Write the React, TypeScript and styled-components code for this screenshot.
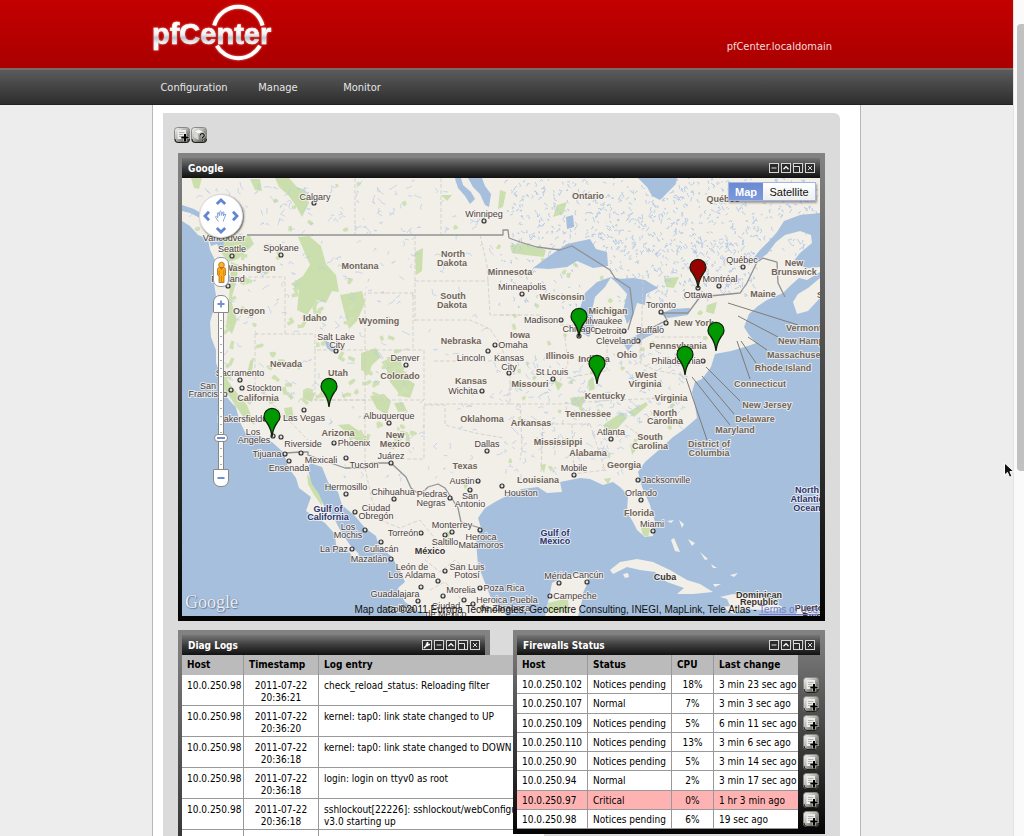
import React from "react";
import styled, { createGlobalStyle } from "styled-components";

const uiFont = `"DejaVu Sans Condensed", "Noto Sans", "DejaVu Sans", sans-serif`;
const mapFont = `"Liberation Sans", Arial, sans-serif`;

const GlobalStyle = createGlobalStyle`
  *, *::before, *::after { box-sizing: border-box; }
  html, body { margin: 0; padding: 0; }
  body {
    background: #ededed;
    font-family: ${uiFont};
    font-size: 10px;
    line-height: 12px;
    color: #000;
  }
  button { font: inherit; padding: 0; border: 0; background: none; cursor: pointer; }
`;

/* ---------- page frame ---------- */

const Shell = styled.div`
  display: flex;
  height: 100vh;
  overflow: hidden;
`;

const Main = styled.div`
  flex: 1;
  min-width: 0;
  display: flex;
  flex-direction: column;
`;

const Centered = styled.div`
  width: 100%;
  max-width: 709px;
  margin: 0 auto;
  display: flex;
`;

const Header = styled.header`
  flex: none;
  height: 68px;
  background: linear-gradient(#c30000, #aa0000);
`;

const HeaderRow = styled(Centered)`
  justify-content: space-between;
  align-items: flex-start;
`;

const LogoSvg = styled.svg`
  display: block;
  overflow: visible;
`;

const HostName = styled.div`
  padding: 40px 29px 0 0;
  font-size: 11px;
  line-height: 14px;
  color: #f3dede;
`;

const NavBar = styled.nav`
  flex: none;
  height: 37px;
  border-top: 2px solid #746c6a;
  border-bottom: 1px solid #222;
  background: linear-gradient(#5b5b5b, #2d2d2d);
`;

const NavLink = styled.a`
  width: 84px;
  line-height: 35px;
  font-size: 11px;
  text-align: center;
  text-decoration: none;
  color: #e6e6e6;
`;

const Sheet = styled.main`
  flex: none;
  width: 100%;
  max-width: 709px;
  margin: 0 auto;
  padding: 8px 20px 20px 10px;
  background: #fff;
  border: solid #b8b8b8;
  border-width: 0 1px;
`;

const Panel = styled.section`
  padding: 14px 11px;
  border-radius: 0 6px 6px 0;
  background: #dbdbdb;
`;

const Toolbar = styled.div`
  display: flex;
  gap: 1px;
  margin-bottom: 10px;
`;

const IconButton = styled.button`
  display: block;
  width: 16px;
  height: 16px;
`;

const Widgets = styled.div`
  padding: 0 4px;
  display: grid;
  grid-template-columns: 1fr 1fr;
  column-gap: 23px;
  row-gap: 9px;
  align-items: start;
`;

/* ---------- portlets ---------- */

const Portlet = styled.section<{ $wide?: boolean; $raised?: boolean; $fade?: string }>`
  grid-column: ${(p) => (p.$wide ? "1 / -1" : "auto")};
  position: ${(p) => (p.$raised ? "relative" : "static")};
  z-index: ${(p) => (p.$raised ? 1 : "auto")};
  min-width: 0;
  padding: 5px 5px 5px 4px;
  background: linear-gradient(#838383, ${(p) => p.$fade ?? "#040404"});
`;

const PortletHead = styled.header`
  display: flex;
  align-items: center;
  justify-content: space-between;
  height: 20px;
  padding: 0 5px 0 6px;
  background: linear-gradient(#767676, #3c3c3c 50%, #111);
`;

const PortletTitle = styled.h2`
  margin: 0;
  padding-top: 2px;
  font-size: 10px;
  line-height: 18px;
  font-weight: bold;
  color: #fff;
`;

const WindowButtons = styled.div`
  display: flex;
  gap: 2px;
`;

const WindowButton = styled.button`
  display: block;
  width: 10px;
  height: 10px;
  svg { display: block; }
`;

/* ---------- tables ---------- */

const Grid = styled.table<{ $width: number; $height?: number }>`
  width: ${(p) => p.$width}px;
  height: ${(p) => (p.$height ? `${p.$height}px` : "auto")};
  table-layout: fixed;
  border-spacing: 0;
  border-collapse: separate;
`;

const Th = styled.th<{ $w?: number; $last?: boolean }>`
  width: ${(p) => (p.$w ? `${p.$w}px` : "auto")};
  height: 20px;
  padding: 0 5px;
  background: #bbb;
  border-right: ${(p) => (p.$last ? 0 : 1)}px solid #999;
  text-align: left;
  font-weight: bold;
  white-space: nowrap;
`;

const Td = styled.td<{ $center?: boolean; $top?: boolean; $last?: boolean; $alert?: boolean }>`
  padding: ${(p) => (p.$top ? "5px 0 1px 5px" : "2px 5px 0")};
  background: ${(p) => (p.$alert ? "#ffb2b2" : "#fff")};
  border: solid #999;
  border-width: 0 ${(p) => (p.$last ? 0 : 1)}px 1px 0;
  text-align: ${(p) => (p.$center ? "center" : "left")};
  vertical-align: ${(p) => (p.$top ? "top" : "middle")};
  white-space: ${(p) => (p.$top ? "normal" : "nowrap")};
`;

const TimeCell = styled(Td)`
  padding: 5px 5px 1px;
`;

const ActionCell = styled.td`
  padding: 0 0 0 5px;
`;

const ActionHead = styled.th`
  width: 22px;
  padding: 0;
`;

/* ---------- map ---------- */

const MapBox = styled.div`
  position: relative;
  height: 438px;
  overflow: hidden;
  background: #a5bfdd;
`;

const MapSvg = styled.svg`
  display: block;
  width: 100%;
  height: 100%;
  font-family: ${mapFont};
  font-size: 9px;
`;

const MapTypes = styled.div`
  position: absolute;
  top: 4px;
  right: 4px;
  display: flex;
  height: 19px;
  border: 1px solid #a3b6e2;
  box-shadow: 1px 2px 2px rgba(0, 0, 0, 0.35);
`;

const MapType = styled.button<{ $on?: boolean }>`
  width: ${(p) => (p.$on ? 34 : 52)}px;
  font-family: ${mapFont};
  font-size: 11px;
  font-weight: ${(p) => (p.$on ? "bold" : "normal")};
  color: ${(p) => (p.$on ? "#fff" : "#111")};
  background: ${(p) => (p.$on ? "linear-gradient(#6b8ad2, #7c99db)" : "linear-gradient(#fff, #eee)")};
`;

const MapControls = styled.div`
  position: absolute;
  top: 16px;
  left: 16px;
  width: 46px;
  display: flex;
  flex-direction: column;
  align-items: center;
`;

const PanPad = styled.div`
  width: 44px;
  height: 44px;
  border-radius: 50%;
  background: #fff;
  border: 1px solid #ddd;
  box-shadow: 1px 1px 2px rgba(0, 0, 0, 0.6);
  display: grid;
  grid-template-columns: repeat(3, 14px);
  grid-template-rows: repeat(3, 14px);
  place-items: center;
`;

const PanButton = styled.button<{ $col: number; $row: number }>`
  grid-column: ${(p) => p.$col};
  grid-row: ${(p) => p.$row};
  display: grid;
  place-items: center;
`;

const Pegman = styled.button`
  width: 16px;
  height: 30px;
  margin-top: 19px;
  border-radius: 7px;
  background: #fff;
  border: 1px solid #999;
  display: grid;
  place-items: center;
`;

const ZoomButton = styled.button<{ $out?: boolean }>`
  width: 16px;
  height: 18px;
  margin-top: ${(p) => (p.$out ? 0 : 8)}px;
  background: #fff;
  border: 1px solid #888;
  border-radius: ${(p) => (p.$out ? "1px 1px 7px 7px" : "7px 7px 1px 1px")};
  display: grid;
  place-items: center;
`;

const ZoomRange = styled.input`
  appearance: none;
  writing-mode: vertical-lr;
  width: 14px;
  height: 156px;
  margin: 0;
  background: linear-gradient(90deg, transparent 4px, #888 4px, #888 5px, #fff 5px, #fff 9px, #888 9px, #888 10px, transparent 10px);
  &::-webkit-slider-runnable-track {
    width: 14px;
    background: repeating-linear-gradient(transparent 0 7px, #aaa 7px 8px) center / 2px 100% no-repeat;
  }
  &::-webkit-slider-thumb {
    appearance: none;
    width: 14px;
    height: 8px;
    border: 1px solid #888;
    border-radius: 4px;
    background: linear-gradient(#6f8fd8, #6f8fd8) center / 8px 2px no-repeat, #fff;
  }
`;

const GoogleMark = styled.div`
  position: absolute;
  left: 3px;
  bottom: 4px;
  font-family: "Liberation Serif", serif;
  font-size: 18px;
  line-height: 20px;
  color: #e8eef6;
  text-shadow: 1px 1px 1px #6c7f9a, 0 0 1px #6c7f9a;
`;

const Attribution = styled.div`
  position: absolute;
  right: 2px;
  bottom: 0;
  font-family: ${mapFont};
  font-size: 10px;
  line-height: 13px;
  white-space: nowrap;
  color: #111;
  a { color: #7777cc; }
`;

/* ---------- scrollbar and pointer ---------- */

const ScrollTrack = styled.aside`
  flex: none;
  width: 11px;
  padding: 24px 0 0 3px;
  background: #fafafa;
  border-left: 1px solid #e2e2e2;
`;

const ScrollThumb = styled.div`
  height: 447px;
  border-radius: 4px 0 0 4px;
  background: #c1c1c1;
`;

const Pointer = styled.svg`
  position: absolute;
  left: 1003px;
  top: 462px;
`;

/* ---------- icons ---------- */

function Tile({ kind }: { kind: "add" | "help" }) {
  return (
    <svg width="16" height="16" viewBox="0 0 16 16" aria-hidden="true">
      <defs>
        <linearGradient id={`tile-${kind}`} x1="0" y1="0" x2="1" y2="1">
          <stop offset="0" stopColor="#f8f8f4" />
          <stop offset="0.45" stopColor="#b4b4ae" />
          <stop offset="1" stopColor="#33332e" />
        </linearGradient>
      </defs>
      <rect x="0.5" y="0.5" width="15" height="15" rx="3" fill={`url(#tile-${kind})`} stroke="#8a8a84" />
      <path d="M1 12Q1 15.5 4 15.5H12.5Q15.5 15.5 15.5 12" fill="none" stroke="#1e1e1a" />
      {kind === "add" ? (
        <>
          <path d="M3.5 3h8.5v9H3.5z" fill="#ececea" />
          <path d="M5 5.5h5.5M5 7.5h4M5 9.5h2.5" stroke="#aaa" strokeWidth="0.9" />
          <path d="M11 6.5v8M7 10.5h8" stroke="#e2e2d8" strokeWidth="3" />
          <path d="M11 7v7.4M7.3 10.6h7.4" stroke="#000" strokeWidth="2" />
        </>
      ) : (
        <>
          <path d="M3 4.5L7.5 2.5 12 4.5v6L7.5 13 3 10.5z" fill="#8c8c86" />
          <path d="M3 4.5l4.5 2.2L12 4.5 7.5 2.5z" fill="#f6f6f2" />
          <path d="M3 4.5l4.5 2.2V13L3 10.5z" fill="#d8d8d2" />
          <path
            d="M9.2 8.6q0-2 2-2t2 1.8q0 1-1.2 1.7-.8.5-.8 1.4M11.2 12.8v1.4"
            fill="none"
            stroke="#d4d4cc"
            strokeWidth="2.6"
          />
          <path
            d="M9.2 8.6q0-2 2-2t2 1.8q0 1-1.2 1.7-.8.5-.8 1.4M11.2 12.8v1.4"
            fill="none"
            stroke="#1a1a1a"
            strokeWidth="1.3"
          />
        </>
      )}
    </svg>
  );
}

type WindowIcon = "tool" | "min" | "up" | "max" | "close";

const windowGlyphs: Record<WindowIcon, React.ReactNode> = {
  tool: <path d="M2 8l3.2-3.2M5.5 2v2.5H8M4.6 3.6v1.8h1.8M4 6l-2 2" stroke="#fff" strokeWidth="1.6" fill="none" />,
  min: <path d="M2.5 5h5" stroke="#e2e2e2" />,
  up: <path d="M2.5 6.2L5 3.6l2.5 2.6" stroke="#fff" strokeWidth="1.3" fill="none" />,
  max: <path d="M1 3.5h5.5V9" stroke="#e2e2e2" fill="none" />,
  close: <path d="M3 3l4 4M7 3L3 7" stroke="#d8d8d8" fill="none" />,
};

const windowNames: Record<WindowIcon, string> = {
  tool: "Configure",
  min: "Minimize",
  up: "Collapse",
  max: "Maximize",
  close: "Close",
};

function Head({ title, icons }: { title: string; icons: WindowIcon[] }) {
  return (
    <PortletHead>
      <PortletTitle>{title}</PortletTitle>
      <WindowButtons>
        {icons.map((k) => (
          <WindowButton key={k} type="button" aria-label={`${windowNames[k]} ${title}`}>
            <svg width="10" height="10" viewBox="0 0 10 10">
              <rect x="0.5" y="0.5" width="9" height="9" fill="#2b2b2b" stroke="#d4d4d4" />
              {windowGlyphs[k]}
            </svg>
          </WindowButton>
        ))}
      </WindowButtons>
    </PortletHead>
  );
}

function Logo() {
  return (
    <LogoSvg width="120" height="68" viewBox="0 0 120 68" role="img" aria-label="pfCenter">
      <defs>
        <linearGradient id="chrome" x1="0" y1="0" x2="0" y2="1">
          <stop offset="0.2" stopColor="#fff" />
          <stop offset="0.5" stopColor="#f2f4f6" />
          <stop offset="0.62" stopColor="#bcc7cf" />
          <stop offset="0.8" stopColor="#f5f7f8" />
        </linearGradient>
        <filter id="glow" x="-20%" y="-20%" width="140%" height="140%">
          <feDropShadow dx="0" dy="0" stdDeviation="1.2" floodColor="#ffb0a0" floodOpacity="0.7" />
        </filter>
      </defs>
      <g filter="url(#glow)">
        <path d="M62.2 25.5A25 25 0 0 1 110.6 25.5M64.8 45.8A25 25 0 0 0 108 45.8" fill="none" stroke="#fff" strokeWidth="4" />
        <text
          x="0"
          y="44"
          fontFamily="Liberation Sans, Arial, sans-serif"
          fontWeight="bold"
          fontSize="29"
          fill="url(#chrome)"
          stroke="url(#chrome)"
          strokeWidth="0.6"
        >
          pfCenter
        </text>
      </g>
    </LogoSvg>
  );
}

/* ---------- map data ---------- */

const water = [
  // Pacific coast, Baja and the Gulf of California
  "M182 221L190 226L198 235L208 239L210 250L215 260L214 283L216 296L213 312L210 322L211 337L216 350L216 363L221 376L225 395L236 408L240 422L246 434L262 437L272 442L284 453L288 467L296 478L299 488L311 497L306 511L325 523L335 534L336 545L347 549L352 556L362 562L358 553L350 545L341 532L334 518L325 508L319 494L312 484L308 470L310 463L322 467L328 482L338 492L342 505L355 516L365 528L376 536L379 546L391 556L400 570L405 582L398 588L405 602L418 611L431 616H182z",
  // Gulf of Mexico and the Atlantic
  "M507 616L500 609L491 598L485 583L478 565L476 542L481 528L478 518L485 508L495 502L508 495L522 489L538 487L547 493L562 492L560 482L580 478L590 479L603 485L613 482L620 487L628 495L627 512L633 522L637 530L645 537L653 536L655 522L650 505L642 487L638 472L645 462L660 449L673 437L683 430L697 418L695 405L692 392L695 382L702 379L711 367L715 354L731 351L748 346L756 343L749 335L744 327L749 314L758 306L767 300L783 293L791 285L799 278L807 280L820 272V616z",
  // St Lawrence
  "M820 213L800 215L784 221L777 232L770 240L760 250L748 265L757 261L767 254L776 242L785 235L800 231L811 235L812 243L800 253L793 262L806 268L820 267z",
  // Great Lakes
  "M533 268L549 256L567 244L590 239L596 249L607 252L608 266L593 268L577 261L567 267L549 269z",
  "M582 333L580 308L585 293L597 282L611 277L605 287L595 297L592 310L594 326L589 337z",
  "M610 277L622 279L633 278L645 280L658 288L646 294L645 305L637 303L633 316L627 324L623 311L627 294L618 284z",
  "M622 341L632 338L640 333L663 325L660 331L645 338L632 346L628 351z",
  "M660 314L672 309L690 308L688 315L668 318z",
  // James Bay and Lake Winnipeg
  "M638 178H677L675 185L667 193L660 200L652 196L647 187z",
  "M455 178H461L463 185L471 192L475 199L470 204L465 196L458 188z",
  "M468 178H482L485 186L491 194L489 207L485 205L480 194L473 187z",
  "M566 217L573 215L574 227L567 229z",
  "M325 341L331 343L335 349L332 352L327 348z",
  "M182 205L194 209L204 215L200 218L190 213L182 211z",
  "M209 240L223 238L224 247L219 248L217 244L211 246z",
];

const land = [
  "M545 616L549 598L552 583L563 577L587 572L588 582L583 593L582 601L578 616z",
  "M610 570L620 562L637 559L653 562L670 570L687 580L700 584L713 592L693 594L677 594L684 588L667 582L655 572L640 570L627 567L613 574z",
  "M720 597L733 594L763 598L783 607L775 611L745 609L734 614L721 607L730 606L727 599z",
  "M796 606H812L817 611L805 615H796z",
  "M793 302L798 294L808 288L820 278V298L808 311L797 314z",
  "M671 540L674 538L680 552L675 551z",
  "M667 521L674 520L671 523zM679 520L684 524L682 528zM688 539L695 543L692 546zM700 552L708 559L705 560zM711 564L717 568L713 568z",
  "M623 574L628 573L629 577L625 578zM730 575L738 573L734 577zM713 584H721L715 587z",
];

const forests = [
  "M191 178H202L199 189L194 188z",
  "M250 179L260 179L262 191L255 190zM275 178H289L297 187L305 190L309 203L302 217L296 206L289 196L279 187z",
  "M298 237L309 236L321 246L326 264L336 275L339 292L332 291L326 303L317 300L307 315L297 310L299 291L291 284L303 276L310 265z",
  "M340 295L362 291L365 303L357 321L349 329L345 315z",
  "M223 238L250 236L254 244L238 259L229 262L222 254z",
  "M231 262L239 265L235 286L231 300L237 320L232 334L226 327L229 300z",
  "M216 370L222 372L233 388L247 405L255 425L244 418L231 399L220 384z",
  "M415 252L423 248L422 271L416 275zM441 195H452L447 201zM500 190L506 192L503 207L498 209z",
  "M361 353L376 348L381 357L372 365L369 374L361 370zM384 361L392 357L401 361L404 377L415 384L410 398L401 396L390 382z",
  "M338 425L349 424L369 438L365 446L350 436zM303 390L315 393L312 402L303 398zM370 396L384 394L391 401L387 415L377 409z",
  "M510 245L525 243L546 250L544 257L525 255L512 253zM557 205L567 202L563 214L553 217z",
  "M603 425L622 412L627 418L617 429L606 432zM628 412L646 402L648 405L634 417z",
  "M664 278L679 277L674 288L666 287zM707 305L717 302L714 314L706 312zM630 443L636 450L632 455z",
  "M548 603L568 598L569 612H548zM641 527L650 528L648 537L643 535zM604 479L611 478L608 484z",
  "M307 474L314 482L323 499L322 506L314 495L308 484zM394 403L403 402L407 411L398 412z",
  "M570 398L587 396L581 408L572 405zM588 381L593 377L595 389L589 391zM540 465L546 464L544 473zM553 379L563 384L558 391z",
  "M633 567L641 565L643 569L637 570zM446 531L451 533L448 539zM463 482L468 485L465 490z",
  "M284 408L292 407L294 420L286 418zM250 361L254 357L252 371L247 374z",
];

const stateLines =
  "M355 178V235M441 178V235M415 235V321M415 281H489M415 320H470L490 329M285 334H315V350H365V293H413V350M285 334V277H238M255 334H285M255 334V386L308 440M315 350V400H365V350M308 400H424V350H365M365 400V468M424 406V459H391M424 405H445V425L475 433L504 438M434 361H510M480 235L487 265L490 315L520 315M490 329L500 344L507 362L515 376M510 362V404H424M500 315L543 315M567 378L610 370M510 404H560L612 400M520 404L522 448L520 460M541 472L543 424H590M572 424L574 478M590 424L605 470L573 474M643 275L641 362M655 337H709M640 337V363L655 370L690 377M607 337V370M560 325H600M625 425L660 449M604 400L680 398M565 337L568 364L557 387M365 468L372 500L380 520L400 528L420 520L440 545L425 560L440 572L455 560L470 572M400 570L420 565M430 590L445 582L462 600";

const countryLines = [
  "M247 235H503V230H508L509 238L520 242L537 247L560 250L572 246L610 270L615 278L630 288L633 313L628 330M640 334L667 320L663 313H688L700 297L740 293L747 283L757 262L763 258L777 262L778 283L785 297",
  "M285 453L301 452H308V455L345 468H365L371 463H391L406 477L411 488L420 495L428 487L438 484L445 488L458 508L461 522L480 528",
];

const leaders =
  "M728 303L798 325M738 316L778 337M748 337L767 350M741 341L756 363M737 341L750 379M706 367L740 401M702 376L734 414M692 377L730 425M686 378L707 440";

type Label = [string, number, number];

const states: Label[] = [
  ["Ontario", 588, 199], ["Québec", 723, 202], ["Washington", 250, 271], ["Montana", 360, 269],
  ["North", 453, 257], ["Dakota", 452, 266], ["South", 453, 299], ["Dakota", 452, 308],
  ["Minnesota", 510, 275], ["Oregon", 249, 314], ["Idaho", 315, 321], ["Wyoming", 379, 324],
  ["Wisconsin", 562, 300], ["Michigan", 608, 314], ["Nebraska", 461, 344], ["Iowa", 520, 338],
  ["Nevada", 286, 367], ["Utah", 338, 376], ["Colorado", 400, 379], ["Kansas", 471, 384],
  ["Illinois", 560, 359], ["Indiana", 594, 362], ["Ohio", 627, 358], ["Missouri", 530, 387],
  ["West", 646, 378], ["Virginia", 645, 387], ["Virginia", 671, 401], ["Kentucky", 605, 399],
  ["California", 258, 401], ["Arizona", 338, 436], ["New", 395, 438], ["Mexico", 395, 447],
  ["Oklahoma", 482, 422], ["Texas", 465, 469], ["Arkansas", 531, 426], ["Tennessee", 588, 417],
  ["North", 665, 416], ["Carolina", 665, 424], ["South", 650, 440], ["Carolina", 650, 449],
  ["Mississippi", 558, 445], ["Alabama", 588, 456], ["Georgia", 624, 468], ["Louisiana", 538, 483],
  ["Florida", 639, 516], ["Pennsylvania", 678, 349], ["New York", 694, 326], ["Maine", 763, 297],
  ["New", 794, 266], ["Brunswick", 794, 275], ["Connecticut", 760, 387],
  ["Rhode Island", 783, 371], ["New Jersey", 767, 408], ["Delaware", 755, 422],
  ["Maryland", 735, 433], ["District of", 709, 447], ["Columbia", 709, 456],
];

const edgeStates: Label[] = [
  ["Vermont", 786, 331], ["New Hampshire", 778, 344], ["Massachusetts", 767, 358], ["S", 817, 298],
];

const cities: Label[] = [
  ["Calgary", 315, 200], ["Winnipeg", 484, 217], ["Vancouver", 224, 241], ["Seattle", 232, 252],
  ["Spokane", 281, 251], ["Portland", 228, 282], ["Salt Lake", 336, 340], ["City", 337, 348],
  ["Denver", 405, 361], ["Lincoln", 471, 361], ["Omaha", 513, 348], ["Kansas", 509, 361],
  ["City", 509, 370], ["Minneapolis", 522, 290], ["Madison", 541, 323], ["Milwaukee", 601, 324],
  ["Chicago", 579, 332], ["Detroit", 608, 334], ["Cleveland", 616, 344], ["Buffalo", 650, 333],
  ["Toronto", 661, 308], ["Ottawa", 698, 298], ["Montréal", 720, 282], ["Québec", 742, 263],
  ["Philadelphia", 676, 364], ["St Louis", 552, 375], ["Sacramento", 240, 376], ["Stockton", 264, 391],
  ["San", 208, 389], ["Francisco", 208, 397], ["Bakersfield", 240, 422], ["Las Vegas", 304, 421],
  ["Los", 253, 435], ["Angeles", 254, 443], ["Riverside", 303, 447], ["Albuquerque", 389, 419],
  ["Phoenix", 354, 446], ["Wichita", 463, 394], ["Dallas", 487, 447], ["Tijuana", 267, 457],
  ["Mexicali", 321, 463], ["Tucson", 364, 468], ["Juárez", 391, 459], ["Ensenada", 289, 471],
  ["Hermosillo", 346, 490], ["Chihuahua", 393, 495], ["Piedras", 432, 497], ["Negras", 431, 506],
  ["Austin", 462, 484], ["San", 470, 499], ["Antonio", 470, 507], ["Houston", 521, 496],
  ["Ciudad", 376, 511], ["Obregón", 376, 519], ["Los", 348, 530], ["Mochis", 348, 538],
  ["Torreón", 403, 536], ["Monterrey", 452, 528], ["Saltillo", 445, 545], ["Heroica", 481, 540],
  ["Matamoros", 481, 548], ["La Paz", 334, 552], ["Culiacán", 381, 552], ["Mazatlán", 369, 562],
  ["León de", 412, 570], ["Los Aldama", 412, 578], ["San Luis", 467, 570], ["Potosí", 467, 578],
  ["Guadalajara", 395, 597], ["Morelia", 461, 593], ["Poza Rica", 504, 591], ["Heroica Puebla", 507, 603],
  ["de Zaragoza", 505, 611], ["Colima", 401, 612], ["Ciudad", 446, 609], ["de México", 446, 617],
  ["Mobile", 574, 471], ["Atlanta", 611, 435], ["Jacksonville", 666, 483], ["Orlando", 641, 496],
  ["Miami", 652, 527], ["Mérida", 558, 579], ["Cancún", 588, 578], ["Campeche", 575, 599],
];

const countries: Label[] = [
  ["México", 430, 554], ["Cuba", 665, 580], ["Dominican", 759, 598], ["Republic", 759, 605],
  ["Puerto", 809, 611], ["Rico", 812, 619],
];

const seas: Label[] = [
  ["Gulf of", 328, 512], ["California", 328, 520], ["Gulf of", 555, 536], ["Mexico", 555, 544],
  ["North", 807, 493], ["Atlantic", 807, 502], ["Ocean", 807, 511],
];

const dots: [number, number][] = [
  [314, 203], [484, 221], [232, 256], [281, 255], [228, 286], [336, 351], [406, 365], [495, 345],
  [488, 351], [509, 373], [522, 294], [561, 320], [579, 336], [624, 331], [638, 341], [666, 323],
  [661, 312], [698, 288], [719, 286], [743, 267], [703, 361], [553, 379], [240, 380], [242, 388],
  [231, 390], [225, 394], [304, 410], [265, 419], [273, 436], [281, 437], [334, 443], [389, 423],
  [482, 391], [487, 451], [285, 454], [301, 453], [346, 458], [391, 463], [289, 461], [346, 494],
  [394, 499], [450, 498], [478, 481], [470, 490], [502, 486], [355, 512], [365, 530], [421, 533],
  [452, 532], [445, 535], [480, 530], [352, 549], [381, 542], [391, 559], [445, 571], [438, 581],
  [421, 587], [480, 588], [443, 596], [418, 601], [464, 600], [473, 604], [574, 475], [611, 439],
  [638, 480], [641, 500], [653, 531], [559, 583], [587, 582], [550, 596],
];

const pins: [number, number, string][] = [
  [698, 288, "#990000"], [579, 337, "#009900"], [597, 384, "#009900"], [716, 351, "#009900"],
  [685, 375, "#009900"], [329, 407, "#009900"], [272, 437, "#009900"],
];

// Small lakes and streams, scattered with a repeatable generator.
function scatter(count: number, x0: number, y0: number, w: number, h: number, seed: number, len: number) {
  let s = seed;
  const next = () => {
    s = (s * 16807) % 2147483647;
    return s / 2147483647;
  };
  let d = "";
  for (let i = 0; i < count; i++) {
    const x = Math.round(x0 + next() * w);
    const y = Math.round(y0 + next() * h);
    const dx = ((next() - 0.5) * len).toFixed(1);
    const dy = ((next() - 0.4) * len).toFixed(1);
    const ex = ((next() - 0.5) * len).toFixed(1);
    d += `M${x} ${y}l${dx} ${dy}l${ex} ${(next() * 3).toFixed(1)}`;
  }
  return d;
}

const lakes =
  scatter(620, 508, 178, 310, 75, 11, 5) + scatter(260, 610, 240, 145, 60, 71, 5) + scatter(60, 500, 250, 80, 60, 5, 4);
const streams =
  scatter(110, 190, 180, 300, 55, 37, 9) +
  scatter(130, 225, 240, 270, 160, 91, 9) +
  scatter(190, 500, 350, 130, 125, 23, 8) +
  scatter(90, 630, 350, 55, 75, 43, 7) +
  scatter(40, 330, 400, 150, 80, 17, 7);
const groves =
  scatter(46, 225, 240, 130, 170, 29, 12) +
  scatter(34, 350, 330, 60, 120, 83, 11) +
  scatter(34, 500, 240, 110, 230, 61, 5) +
  scatter(22, 600, 290, 120, 160, 97, 6) +
  scatter(14, 200, 180, 300, 50, 53, 6);

function Labels({ items, fill, bold, anchor = "middle" }: { items: Label[]; fill: string; bold?: boolean; anchor?: "middle" | "start" }) {
  return (
    <g
      fill={fill}
      fontWeight={bold ? "bold" : "normal"}
      textAnchor={anchor}
      stroke="#f7f5f1"
      strokeWidth="2"
      strokeOpacity="0.75"
      paintOrder="stroke"
      strokeLinejoin="round"
    >
      {items.map(([text, x, y], i) => (
        <text key={i} x={x} y={y}>
          {text}
        </text>
      ))}
    </g>
  );
}

function NorthAmerica() {
  return (
    <MapSvg viewBox="182 178 638 438" preserveAspectRatio="xMidYMid slice" role="img" aria-label="Firewall locations">
      <rect x="0" y="0" width="1400" height="900" fill="#f2efe9" />
      <path d={forests.join("")} fill="#cbdfae" />
      <path d={groves} fill="none" stroke="#cfe1b4" strokeWidth="3.5" strokeLinejoin="round" />
      <path d={lakes} fill="none" stroke="#b3cae6" strokeWidth="0.9" />
      <path d={streams} fill="none" stroke="#b6cbe8" strokeWidth="0.7" />
      <path d={water.join("")} fill="#a5bfdd" />
      <path d={land.join("")} fill="#f2efe9" />
      <path d={forests[13]} fill="#cbdfae" />
      <path d={stateLines} fill="none" stroke="#cfcac4" strokeWidth="0.8" strokeDasharray="4 2" />
      {countryLines.map((d) => (
        <path key={d} d={d} fill="none" stroke="#929294" strokeWidth="1.3" strokeLinejoin="round" />
      ))}
      <path d={leaders} stroke="#807b75" strokeWidth="1" />
      {dots.map(([x, y], i) => (
        <circle key={i} cx={x} cy={y} r="2" fill="#ddd" stroke="#333" strokeWidth="1.2" />
      ))}
      <Labels items={cities} fill="#4c4040" />
      <Labels items={states} fill="#706457" bold />
      <Labels items={edgeStates} fill="#706457" bold anchor="start" />
      <Labels items={countries} fill="#39332e" bold />
      <Labels items={seas} fill="#2c3470" bold />
      {pins.map(([x, y, color]) => (
        <path
          key={`${x}-${y}`}
          transform={`translate(${x} ${y})`}
          d="M0 0C-.6-7-2-10-5.2-14.5A8 8 0 1 1 5.2-14.5C2-10 .6-7 0 0z"
          fill={color}
          stroke="#10200c"
          strokeWidth="1.3"
        />
      ))}
    </MapSvg>
  );
}

function Chevron({ turn }: { turn: number }) {
  return (
    <svg width="12" height="12" viewBox="0 0 12 12">
      <path d="M1.8 8L6 4l4.2 4" transform={`rotate(${turn} 6 6)`} fill="none" stroke="#6485d2" strokeWidth="2.8" />
    </svg>
  );
}

function Controls() {
  return (
    <MapControls>
      <PanPad>
        <PanButton type="button" aria-label="Pan up" $col={2} $row={1}><Chevron turn={0} /></PanButton>
        <PanButton type="button" aria-label="Pan left" $col={1} $row={2}><Chevron turn={-90} /></PanButton>
        <PanButton type="button" aria-label="Center map" $col={2} $row={2}>
          <svg width="14" height="14" viewBox="0 0 14 14">
            <path
              d="M4.5 12.5L1.8 8.6Q1.2 7.2 2.4 7.3L4 8.6 3.4 4.2Q3.6 3 4.6 3.8L5.4 6.6 5.8 2.6Q6.6 1.4 7.2 2.6L7.4 6.4 8.8 3Q9.8 2.4 9.9 3.6L9.2 7 10.9 5Q12 4.8 11.8 5.8L9.8 10.4 9.4 12.5"
              fill="#fff"
              stroke="#7d97d6"
              strokeWidth="0.9"
            />
          </svg>
        </PanButton>
        <PanButton type="button" aria-label="Pan right" $col={3} $row={2}><Chevron turn={90} /></PanButton>
        <PanButton type="button" aria-label="Pan down" $col={2} $row={3}><Chevron turn={180} /></PanButton>
      </PanPad>
      <Pegman type="button" aria-label="Street View">
        <svg width="11" height="23" viewBox="0 0 11 23">
          <path d="M1.5 8.5Q1.5 6.5 3.5 6.5H7.5Q9.5 6.5 9.5 8.5V14L8 14.8V21.5H3V14.8L1.5 14z" fill="#fbab18" stroke="#b36b0c" strokeWidth="0.8" />
          <circle cx="5.5" cy="4" r="2.8" fill="#fbb42c" stroke="#b36b0c" strokeWidth="0.8" />
          <path d="M4 6.6L5.5 9 7 6.6z" fill="#d8561c" />
          <path d="M5.5 15v6M3.3 9.5v4.5M7.7 9.5v4.5" stroke="#c77910" strokeWidth="0.7" />
        </svg>
      </Pegman>
      <ZoomButton type="button" aria-label="Zoom in">
        <svg width="8" height="8" viewBox="0 0 8 8"><path d="M4 .5v7M.5 4h7" stroke="#6f8fd8" strokeWidth="1.8" /></svg>
      </ZoomButton>
      <ZoomRange type="range" min="0" max="100" defaultValue="82" aria-label="Zoom level" />
      <ZoomButton type="button" aria-label="Zoom out" $out>
        <svg width="8" height="8" viewBox="0 0 8 8"><path d="M.5 4h7" stroke="#6f8fd8" strokeWidth="2" /></svg>
      </ZoomButton>
    </MapControls>
  );
}

/* ---------- table data ---------- */

const logs: [string, string, string][] = [
  ["10.0.250.98", "2011-07-22 20:36:21", "check_reload_status: Reloading filter"],
  ["10.0.250.98", "2011-07-22 20:36:20", "kernel: tap0: link state changed to UP"],
  ["10.0.250.98", "2011-07-22 20:36:18", "kernel: tap0: link state changed to DOWN"],
  ["10.0.250.98", "2011-07-22 20:36:18", "login: login on ttyv0 as root"],
  ["10.0.250.98", "2011-07-22 20:36:18", "sshlockout[22226]: sshlockout/webConfigurator v3.0 starting up"],
  ["10.0.250.98", "2011-07-22 20:36:17", "kernel: Bootup complete"],
];

const firewalls: [string, string, string, string][] = [
  ["10.0.250.102", "Notices pending", "18%", "3 min 23 sec ago"],
  ["10.0.250.107", "Normal", "7%", "3 min 3 sec ago"],
  ["10.0.250.109", "Notices pending", "5%", "6 min 11 sec ago"],
  ["10.0.250.110", "Notices pending", "13%", "3 min 6 sec ago"],
  ["10.0.250.90", "Notices pending", "5%", "3 min 14 sec ago"],
  ["10.0.250.94", "Normal", "2%", "3 min 17 sec ago"],
  ["10.0.250.97", "Critical", "0%", "1 hr 3 min ago"],
  ["10.0.250.98", "Notices pending", "6%", "19 sec ago"],
];

export default function App() {
  return (
    <>
      <GlobalStyle />
      <Shell>
        <Main>
          <Header>
            <HeaderRow>
              <Logo />
              <HostName>pfCenter.localdomain</HostName>
            </HeaderRow>
          </Header>
          <NavBar>
            <Centered>
              <NavLink href="#configuration">Configuration</NavLink>
              <NavLink href="#manage">Manage</NavLink>
              <NavLink href="#monitor">Monitor</NavLink>
            </Centered>
          </NavBar>
          <Sheet>
            <Panel>
              <Toolbar>
                <IconButton type="button" aria-label="Add widget"><Tile kind="add" /></IconButton>
                <IconButton type="button" aria-label="Help"><Tile kind="help" /></IconButton>
              </Toolbar>
              <Widgets>
                <Portlet $wide>
                  <Head title="Google" icons={["min", "up", "max", "close"]} />
                  <MapBox>
                    <NorthAmerica />
                    <Controls />
                    <MapTypes>
                      <MapType type="button" $on>Map</MapType>
                      <MapType type="button">Satellite</MapType>
                    </MapTypes>
                    <GoogleMark>Google</GoogleMark>
                    <Attribution>
                      Map data ©2011 Europa Technologies, Geocentre Consulting, INEGI, MapLink, Tele Atlas -{" "}
                      <a href="#terms">Terms of Use</a>
                    </Attribution>
                  </MapBox>
                </Portlet>

                <Portlet $fade="#2c2c2c">
                  <Head title="Diag Logs" icons={["tool", "min", "up", "max", "close"]} />
                  <Grid $width={362}>
                    <thead>
                      <tr>
                        <Th $w={62}>Host</Th>
                        <Th $w={75}>Timestamp</Th>
                        <Th $last>Log entry</Th>
                      </tr>
                    </thead>
                    <tbody>
                      {logs.map(([host, time, entry], i) => (
                        <tr key={i}>
                          <Td $top>{host}</Td>
                          <TimeCell $top $center>{time}</TimeCell>
                          <Td $top $last>{entry}</Td>
                        </tr>
                      ))}
                    </tbody>
                  </Grid>
                </Portlet>

                <Portlet $raised>
                  <Head title="Firewalls Status" icons={["min", "up", "max", "close"]} />
                  <Grid $width={303} $height={174}>
                    <thead>
                      <tr>
                        <Th $w={71}>Host</Th>
                        <Th $w={84}>Status</Th>
                        <Th $w={42}>CPU</Th>
                        <Th $last>Last change</Th>
                        <ActionHead aria-label="Actions" />
                      </tr>
                    </thead>
                    <tbody>
                      {firewalls.map(([host, status, cpu, changed]) => {
                        const alert = status === "Critical";
                        return (
                          <tr key={host}>
                            <Td $alert={alert}>{host}</Td>
                            <Td $alert={alert}>{status}</Td>
                            <Td $alert={alert} $center>{cpu}</Td>
                            <Td $alert={alert} $last>{changed}</Td>
                            <ActionCell>
                              <IconButton type="button" aria-label={`Open ${host}`}><Tile kind="add" /></IconButton>
                            </ActionCell>
                          </tr>
                        );
                      })}
                    </tbody>
                  </Grid>
                </Portlet>
              </Widgets>
            </Panel>
          </Sheet>
        </Main>
        <ScrollTrack aria-hidden="true">
          <ScrollThumb />
        </ScrollTrack>
      </Shell>
      <Pointer width="14" height="18" viewBox="0 0 14 18" aria-hidden="true">
        <path d="M1.5 1v12l3-2.6 2 4.8 2.4-1-2-4.6h4z" fill="#111" stroke="#fff" strokeWidth="1" />
      </Pointer>
    </>
  );
}
